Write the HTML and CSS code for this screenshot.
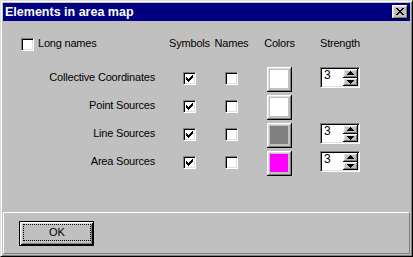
FILE: index.html
```html
<!DOCTYPE html>
<html>
<head>
<meta charset="utf-8">
<title>Elements in area map</title>
<link rel="stylesheet" href="styles.css">
</head>
<body>
<div class="window">
  <div class="titlebar">
    <span class="title">Elements in area map</span>
    <span class="close-btn"><svg width="16" height="14" viewBox="0 0 16 14" shape-rendering="crispEdges"><path fill="#000" d="M4 3h2v1h-2z M10 3h2v1h-2z M5 4h2v1h-2z M9 4h2v1h-2z M6 5h4v1h-4z M7 6h2v1h-2z M6 7h4v1h-4z M5 8h2v1h-2z M9 8h2v1h-2z M4 9h2v1h-2z M10 9h2v1h-2z"/></svg></span>
  </div>
  <div class="content">
    <div class="grid">
      <div class="longnames"><span class="cb"></span><span class="cb-text">Long names</span></div>
      <div class="head">Symbols</div>
      <div class="head">Names</div>
      <div class="head">Colors</div>
      <div class="head">Strength</div>

      <div class="label">Collective Coordinates</div>
      <div class="cell-cb"><span class="cb"><svg class="check" width="11" height="11" viewBox="0 0 11 11" shape-rendering="crispEdges"><path fill="#000" d="M8 2h1v1h-1z M7 3h2v1h-2z M2 4h1v1h-1z M6 4h3v1h-3z M2 5h2v1h-2z M5 5h3v1h-3z M2 6h5v1h-5z M3 7h3v1h-3z M4 8h1v1h-1z"/></svg></span></div>
      <div class="cell-cb"><span class="cb"></span></div>
      <div class="swatch-btn"><span class="swatch swatch-white"></span></div>
      <div class="spin"><span class="spin-value">3</span><span class="spin-btns"><span class="spin-btn up"><svg width="15" height="9" viewBox="0 0 15 9" shape-rendering="crispEdges"><path fill="#000" d="M7 2h1v1h-1z M6 3h3v1h-3z M5 4h5v1h-5z M4 5h7v1h-7z"/></svg></span><span class="spin-btn down"><svg width="15" height="8" viewBox="0 0 15 8" shape-rendering="crispEdges"><path fill="#000" d="M4 2h7v1h-7z M5 3h5v1h-5z M6 4h3v1h-3z M7 5h1v1h-1z"/></svg></span></span></div>

      <div class="label">Point Sources</div>
      <div class="cell-cb"><span class="cb"><svg class="check" width="11" height="11" viewBox="0 0 11 11" shape-rendering="crispEdges"><path fill="#000" d="M8 2h1v1h-1z M7 3h2v1h-2z M2 4h1v1h-1z M6 4h3v1h-3z M2 5h2v1h-2z M5 5h3v1h-3z M2 6h5v1h-5z M3 7h3v1h-3z M4 8h1v1h-1z"/></svg></span></div>
      <div class="cell-cb"><span class="cb"></span></div>
      <div class="swatch-btn"><span class="swatch swatch-white"></span></div>
      <div class="empty"></div>

      <div class="label">Line Sources</div>
      <div class="cell-cb"><span class="cb"><svg class="check" width="11" height="11" viewBox="0 0 11 11" shape-rendering="crispEdges"><path fill="#000" d="M8 2h1v1h-1z M7 3h2v1h-2z M2 4h1v1h-1z M6 4h3v1h-3z M2 5h2v1h-2z M5 5h3v1h-3z M2 6h5v1h-5z M3 7h3v1h-3z M4 8h1v1h-1z"/></svg></span></div>
      <div class="cell-cb"><span class="cb"></span></div>
      <div class="swatch-btn"><span class="swatch swatch-gray"></span></div>
      <div class="spin"><span class="spin-value">3</span><span class="spin-btns"><span class="spin-btn up"><svg width="15" height="9" viewBox="0 0 15 9" shape-rendering="crispEdges"><path fill="#000" d="M7 2h1v1h-1z M6 3h3v1h-3z M5 4h5v1h-5z M4 5h7v1h-7z"/></svg></span><span class="spin-btn down"><svg width="15" height="8" viewBox="0 0 15 8" shape-rendering="crispEdges"><path fill="#000" d="M4 2h7v1h-7z M5 3h5v1h-5z M6 4h3v1h-3z M7 5h1v1h-1z"/></svg></span></span></div>

      <div class="label">Area Sources</div>
      <div class="cell-cb"><span class="cb"><svg class="check" width="11" height="11" viewBox="0 0 11 11" shape-rendering="crispEdges"><path fill="#000" d="M8 2h1v1h-1z M7 3h2v1h-2z M2 4h1v1h-1z M6 4h3v1h-3z M2 5h2v1h-2z M5 5h3v1h-3z M2 6h5v1h-5z M3 7h3v1h-3z M4 8h1v1h-1z"/></svg></span></div>
      <div class="cell-cb"><span class="cb"></span></div>
      <div class="swatch-btn"><span class="swatch swatch-magenta"></span></div>
      <div class="spin"><span class="spin-value">3</span><span class="spin-btns"><span class="spin-btn up"><svg width="15" height="9" viewBox="0 0 15 9" shape-rendering="crispEdges"><path fill="#000" d="M7 2h1v1h-1z M6 3h3v1h-3z M5 4h5v1h-5z M4 5h7v1h-7z"/></svg></span><span class="spin-btn down"><svg width="15" height="8" viewBox="0 0 15 8" shape-rendering="crispEdges"><path fill="#000" d="M4 2h7v1h-7z M5 3h5v1h-5z M6 4h3v1h-3z M7 5h1v1h-1z"/></svg></span></span></div>
    </div>
  </div>
  <div class="footer">
    <button class="ok"><span class="focus">OK</span></button>
  </div>
</div>
</body>
</html>
```

FILE: styles.css
```css
* {
  box-sizing: border-box;
}

html, body {
  margin: 0;
  padding: 0;
}

body {
  width: 413px;
  height: 257px;
  overflow: hidden;
  background: #c0c0c0;
  font-family: "Liberation Sans", Arial, sans-serif;
  font-size: 11px;
  color: #000;
}

.window {
  width: 413px;
  height: 257px;
  display: flex;
  flex-direction: column;
  background: #c0c0c0;
  border: 1px solid;
  border-color: #dfdfdf #000 #000 #dfdfdf;
  box-shadow: inset 1px 1px #fff, inset -1px -1px #808080;
  padding: 2px;
}

.titlebar {
  height: 18px;
  flex: none;
  display: flex;
  align-items: flex-start;
  background: #000080;
  color: #fff;
  padding: 2px 2px 2px 2px;
}

.title {
  font-weight: bold;
  font-size: 12.5px;
  line-height: 14px;
  white-space: nowrap;
}

.close-btn {
  margin-left: auto;
  width: 16px;
  height: 14px;
  display: block;
  background: #c0c0c0;
  box-shadow: inset -1px -1px #000, inset 1px 1px #fff, inset -2px -2px #808080, inset 2px 2px #dfdfdf;
}

.close-btn svg,
.spin-btn svg,
.cb svg {
  display: block;
}

.content {
  flex: 1;
  padding-top: 15px;
}

.grid {
  display: grid;
  grid-template-columns: 166px 41px 43px 53px 68px;
  grid-template-rows: 31px 28px 28px 28px 28px;
  align-items: start;
  letter-spacing: -0.2px;
}

.longnames {
  display: flex;
  align-items: flex-start;
  gap: 4px;
  padding-left: 18px;
}

.longnames .cb {
  margin-top: 2px;
}

.cb-text {
  margin-top: 1px;
  line-height: 13px;
  white-space: nowrap;
}

.head {
  justify-self: center;
  margin-top: 1px;
  line-height: 13px;
  white-space: nowrap;
}

.label {
  justify-self: end;
  padding-right: 14px;
  margin-top: 4px;
  line-height: 13px;
  white-space: nowrap;
}

.cell-cb {
  justify-self: center;
  margin-top: 5px;
}

.cb {
  display: block;
  width: 13px;
  height: 13px;
  background: #fff;
  border: 1px solid;
  border-color: #808080 #fff #fff #808080;
  box-shadow: inset 1px 1px #000, inset -1px -1px #dfdfdf;
}

.swatch-btn {
  justify-self: center;
  width: 25px;
  height: 25px;
  background: #c0c0c0;
  box-shadow: inset -1px -1px #000, inset 1px 1px #fff, inset -2px -2px #808080, inset 2px 2px #dfdfdf;
  padding: 3px 4px 4px 3px;
}

.swatch {
  display: block;
  width: 18px;
  height: 18px;
}

.swatch-white {
  background: #fff;
}

.swatch-gray {
  background: #808080;
}

.swatch-magenta {
  background: #ff00ff;
}

.spin {
  justify-self: center;
  display: flex;
  width: 40px;
  height: 21px;
  background: #fff;
  border: 1px solid;
  border-color: #808080 #fff #fff #808080;
  box-shadow: inset 1px 1px #000, inset -1px -1px #dfdfdf;
  padding: 1px;
}

.spin-value {
  flex: 1;
  padding-left: 2px;
  font-size: 12px;
  line-height: 12px;
  letter-spacing: 0;
}

.spin-btns {
  display: flex;
  flex-direction: column;
  width: 15px;
}

.spin-btn {
  display: block;
  width: 15px;
  background: #c0c0c0;
  box-shadow: inset -1px -1px #000, inset 1px 1px #fff, inset -2px -2px #808080, inset 2px 2px #dfdfdf;
}

.spin-btn.up {
  height: 9px;
}

.spin-btn.down {
  height: 8px;
}

.footer {
  height: 42px;
  flex: none;
  border: 1px solid;
  border-color: #fff #808080 #808080 #fff;
  padding: 8px 0 0 15px;
}

.ok {
  display: flex;
  width: 75px;
  height: 25px;
  margin: 0;
  background: #c0c0c0;
  border: 1px solid #000;
  border-radius: 0;
  box-shadow: inset 1px 1px #fff, inset -1px -1px #000, inset 2px 2px #dfdfdf, inset -2px -2px #808080;
  padding: 2px 2px 4px 3px;
  font-family: "Liberation Sans", Arial, sans-serif;
  font-size: 11px;
  color: #000;
}

.focus {
  flex: 1;
  display: flex;
  align-items: center;
  justify-content: center;
  border: 1px dotted #000;
  line-height: 13px;
}
```
